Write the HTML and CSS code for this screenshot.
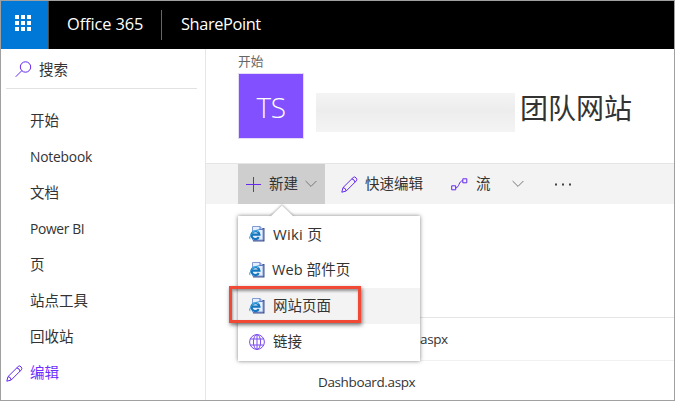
FILE: index.html
```html
<!DOCTYPE html>
<html lang="zh-CN">
<head>
<meta charset="utf-8">
<title>SharePoint</title>
<link rel="stylesheet" href="styles.css">
</head>
<body>
<svg class="defs" width="0" height="0" aria-hidden="true">
  <symbol id="pencil" viewBox="0 0 17 17">
    <path d="M.8 16.2 2 11.6 12.2 1.5Q13.5.2 15 1.8T15.4 4.8L5.2 15ZM2 11.6Q5 12 5.2 15M10.8 2.9Q13.6 3.4 14 6.2"/>
  </symbol>
  <symbol id="chevron" viewBox="0 0 12 8"><path d="M.6 1 6 6.4 11.4 1"/></symbol>
  <symbol id="page" viewBox="0 0 16 16">
    <path d="M6 2H15.5V15.5H4V13Z" fill="#42558f"/>
    <path d="M3.5.5H11L14 3.5V14H3.5Z" fill="#e5efff" stroke="#839bd5"/>
    <path d="M11 .5V3.5H14" fill="#b8cdf5" stroke="#6079b9"/>
    <path d="M9.8 11.2A4 4 0 1 1 10.4 8.6H3.2" fill="none" stroke="#1676bd" stroke-width="2.2"/>
    <path d="M9.2 5.8A3.8 3.8 0 0 0 3 6.8" fill="none" stroke="#55c5f5" stroke-width="1"/>
    <path d="M1.2 13.2Q-.5 11.5 3 7.5T11 3.5" fill="none" stroke="#399bd5" stroke-width="1"/>
  </symbol>
</svg>
<div class="window">
  <header class="topbar">
    <div class="launcher"><svg width="16" height="16" fill="#fff"><path d="M0 0h4v4H0zM6 0h4v4H6zM12 0h4v4h-4zM0 6h4v4H0zM6 6h4v4H6zM12 6h4v4h-4zM0 12h4v4H0zM6 12h4v4H6zM12 12h4v4h-4z"/></svg></div>
    <span class="suite">Office 365</span>
    <span class="app">SharePoint</span>
  </header>
  <div class="body">
    <aside class="sidebar">
      <div class="search">
        <svg class="line" width="17" height="17"><circle cx="10.5" cy="6" r="5.2"/><path d="M6.8 9.7.7 15.8"/></svg>
        <span>搜索</span>
      </div>
      <nav class="nav">
        <a>开始</a>
        <a class="latin">Notebook</a>
        <a>文档</a>
        <a class="latin power">Power BI</a>
        <a>页</a>
        <a>站点工具</a>
        <a>回收站</a>
        <a class="edit"><svg class="line" width="17" height="17"><use href="#pencil"/></svg>编辑</a>
      </nav>
    </aside>
    <main class="main">
      <div class="crumb">开始</div>
      <div class="site">
        <div class="logo">TS</div>
        <div class="redacted"></div>
        <h1>团队网站</h1>
      </div>
      <div class="toolbar">
        <div class="new">
          <svg class="line" width="15" height="15"><path d="M7.5 0v15M0 7.5h15"/></svg>
          <span>新建</span>
          <svg class="chev" width="12" height="8"><use href="#chevron"/></svg>
          <div class="menu">
            <svg class="beak" width="24" height="12"><path d="M0 12 12 .5 24 12Z"/></svg>
            <div class="item"><svg width="16" height="16"><use href="#page"/></svg><span class="wiki">Wiki 页</span></div>
            <div class="item"><svg width="16" height="16"><use href="#page"/></svg><span class="web">Web 部件页</span></div>
            <div class="item active"><svg width="16" height="16"><use href="#page"/></svg><span>网站页面</span><div class="callout"></div></div>
            <div class="item"><svg class="globe" width="16" height="16"><circle cx="8" cy="8" r="7.4"/><ellipse cx="8" cy="8" rx="3.6" ry="7.4"/><path d="M8 .5v15M1.3 5h13.4M1.3 11h13.4"/></svg><span>链接</span></div>
          </div>
        </div>
        <svg class="line quick-icon" width="17" height="17"><use href="#pencil"/></svg>
        <span class="quick">快速编辑</span>
        <svg class="line flow-icon" width="17" height="13"><path d="M.7 7.8h4v4h-4zM11.8.8h4v4h-4zM4.7 9.8C8.5 9.8 7.5 2.8 11.8 2.8"/></svg>
        <span>流</span>
        <svg class="chev flow-chev" width="12" height="8"><use href="#chevron"/></svg>
        <svg class="more" width="18" height="3"><path d="M1 .5h2v2H1zM8 .5h2v2H8zM15 .5h2v2h-2z"/></svg>
      </div>
      <div class="files">
        <div class="file"><span class="partial">aspx</span></div>
        <div class="file last"><span class="dashboard">Dashboard.aspx</span></div>
      </div>
    </main>
  </div>
</div>
</body>
</html>
```
FILE: styles.css
```css
* { box-sizing: border-box; }
body { margin: 0; background: #fff; color: #333; font: 14.5px/20px "Open Sans", "Noto Sans CJK SC", sans-serif; }
svg { display: block; flex: none; overflow: visible; }
.defs { position: absolute; }
.window { width: 675px; height: 401px; border: 1px solid #a0a0a0; overflow: hidden; }
.line { fill: none; stroke: #6429ee; stroke-width: 1; }
.chev { fill: none; stroke: #777; stroke-width: 1; }
.topbar { display: flex; align-items: center; height: 48px; background: #000; color: #fff; white-space: nowrap; }
.launcher { width: 48px; height: 48px; padding: 14px; background: #0078d7; border-right: 1px solid #484848; }
.suite { width: 113px; height: 30px; padding-left: 18px; font-size: 16.4px; line-height: 28px; letter-spacing: -.1px; border-right: 1px solid #666; }
.app { padding-left: 19px; margin-top: -2px; font-size: 16.4px; letter-spacing: -.4px; }
.body { display: flex; height: 351px; }
.sidebar { width: 205px; border-right: 1px solid #e6e6e6; }
.search { display: flex; align-items: center; gap: 7px; width: 191px; height: 40px; margin-left: 5px; padding: 2px 0 0 9px; border-bottom: 1px solid #e2e2e2; }
.nav { padding-top: 14px; }
.nav a { display: flex; align-items: center; height: 36px; padding-left: 29px; }
.nav .latin { font-size: 13.8px; letter-spacing: -.2px; }
.nav .power { letter-spacing: -.35px; }
.nav .edit { padding-left: 5px; gap: 7px; color: #6c2eff; }
.main { flex: 1; min-width: 0; }
.crumb { height: 24px; padding: 2px 0 0 32px; font-size: 12.7px; color: #666; }
.site { display: flex; height: 90px; padding-left: 32px; }
.logo { width: 66px; height: 66px; border: 1px solid #e3dcf4; background: #8250ff; color: #fff; font: 300 28px/66px "Open Sans", sans-serif; letter-spacing: -.5px; text-align: center; }
.redacted { width: 199px; height: 39px; margin: 20px 5px 0 12px; background: linear-gradient(180deg, #f4f4f4, #ededed 45%, #f4f4f4); }
h1 { margin: 14px 0 0; font: 400 28px/40px "Noto Sans CJK SC", sans-serif; }
.toolbar { display: flex; align-items: center; height: 41px; padding-left: 32px; border-top: 1px solid #e5e5e5; background: #f3f3f3; }
.new { position: relative; display: flex; align-items: center; width: 87px; height: 40px; padding-left: 8px; background: #cecece; }
.new > span { margin: 0 7px 0 8px; }
.quick-icon { margin: 0 7px 0 16px; }
.flow-icon { margin: 0 8px 0 28px; }
.flow-chev { margin-left: 21px; }
.more { margin-left: 30px; fill: #444; }
.menu { position: absolute; z-index: 2; top: 52px; left: 0; width: 182px; height: 145px; background: #fff; box-shadow: 0 0 4px rgba(0,0,0,.5); }
.beak { position: absolute; left: 32px; top: -11px; fill: #fff; filter: drop-shadow(0 -1px 1px rgba(0,0,0,.3)); clip-path: inset(-4px -4px 0 -4px); }
.item { position: relative; display: flex; align-items: center; height: 36px; padding-left: 11px; gap: 8px; }
.wiki { font-size: 14.9px; letter-spacing: .25px; }
.web { margin-left: -1px; letter-spacing: .1px; }
.active { background: #f3f3f3; }
.callout { position: absolute; left: -9px; top: -2px; width: 132px; height: 37px; border: 3px solid #f04935; box-shadow: 1px 2px 4px rgba(0,0,0,.55), inset 1px 2px 3px rgba(0,0,0,.4); }
.globe { fill: none; stroke: #7a4af0; stroke-width: 1; }
.files { height: 196px; margin-left: 32px; padding-top: 113px; font-size: 13.5px; letter-spacing: -.37px; }
.file { display: flex; align-items: center; height: 43px; border-top: 1px solid #e5e5e5; }
.last { border-top-color: #f1f1f1; }
.partial { margin-left: 182px; }
.dashboard { margin-left: 80px; }
```
